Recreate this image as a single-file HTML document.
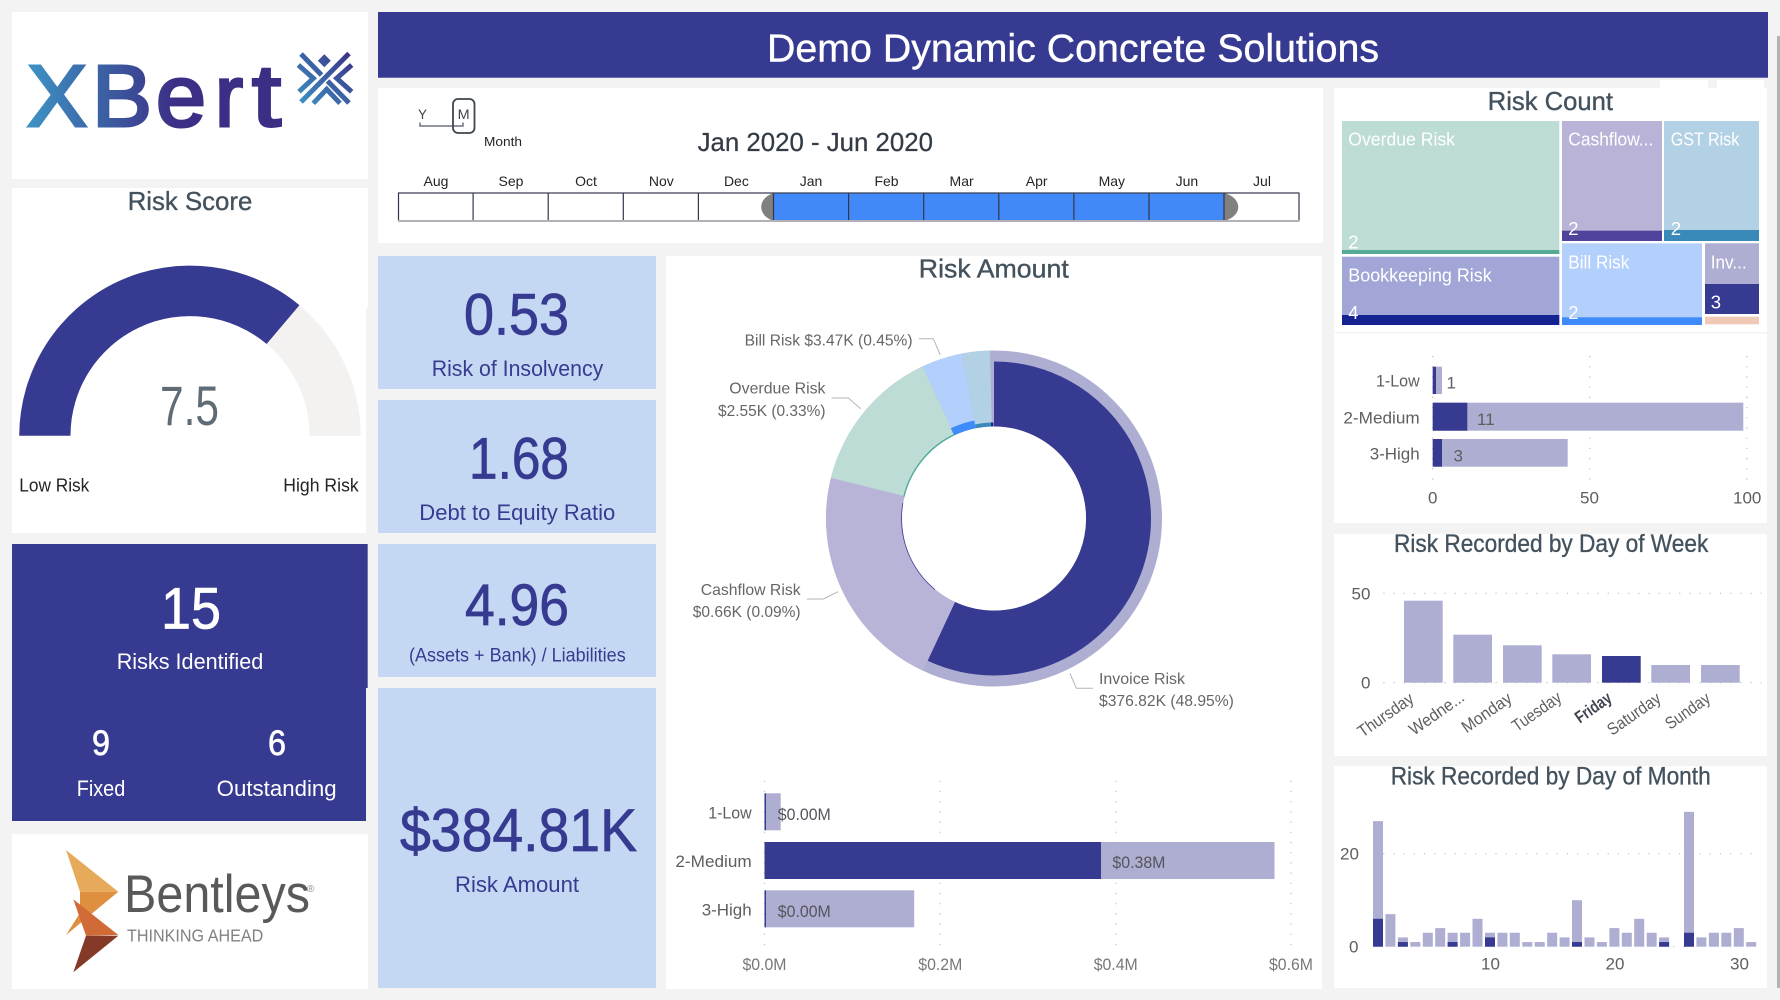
<!DOCTYPE html>
<html lang="en">
<head>
<meta charset="utf-8">
<title>Demo Dynamic Concrete Solutions</title>
<style>
html,body{margin:0;padding:0;background:#f3f3f3;width:1780px;height:1000px;overflow:hidden}
svg{display:block}
text{font-family:"Liberation Sans",sans-serif}
.ti{fill:#44525d;font-size:26px;stroke:#44525d;stroke-width:.35px}
.lb{fill:#605e5c;font-size:17px}
.dl{fill:#666;font-size:16px}
.tm{fill:#fff;font-size:18.5px}
.kn{fill:#373a91;font-size:58px;stroke:#373a91;stroke-width:.8px}
.kl{fill:#373a91;font-size:22px}
.wn{fill:#fff;stroke:#fff;stroke-width:.7px}
.wl{fill:#fff;font-size:22px}
.mo{fill:#252423;font-size:14px;text-anchor:middle}
.gd{stroke:#bdbdbd;stroke-width:1.2;stroke-dasharray:1.2 9;fill:none}
.lf{fill:#aeadd2}
.dk{fill:#373a91}
.ld{fill:none;stroke:#b5b5b5;stroke-width:1}
</style>
</head>
<body>
<svg width="1780" height="1000" viewBox="0 0 1780 1000" xmlns="http://www.w3.org/2000/svg">
<defs>
<linearGradient id="xb" gradientUnits="userSpaceOnUse" x1="26" y1="100" x2="175" y2="100">
<stop offset="0" stop-color="#3d94c5"/><stop offset="1" stop-color="#3b2f85"/>
</linearGradient>
<linearGradient id="xm" gradientUnits="userSpaceOnUse" x1="298" y1="104" x2="352" y2="52">
<stop offset="0" stop-color="#3d94c5"/><stop offset="1" stop-color="#3b2f85"/>
</linearGradient>
</defs>

<!-- background panels -->
<rect x="12" y="12" width="356" height="167" fill="#fff"/>
<rect x="12" y="188" width="354" height="345" fill="#fff"/>
<rect x="366" y="188" width="2" height="120" fill="#fff"/>
<rect x="12" y="834" width="356" height="155" fill="#fff"/>
<rect x="378" y="88" width="945" height="155" fill="#fff"/>
<rect x="666" y="256" width="656" height="733" fill="#fff"/>
<rect x="1334" y="88" width="433" height="435" fill="#fff"/>
<rect x="1660" y="80" width="48" height="8" fill="#fff"/>
<rect x="1717" y="80" width="47" height="8" fill="#fff"/>
<rect x="1334" y="332" width="433" height="1.5" fill="#f4f4f4"/>
<rect x="1334" y="534" width="433" height="222" fill="#fff"/>
<rect x="1334" y="766" width="433" height="222" fill="#fff"/>
<rect x="1777" y="36" width="3" height="952" fill="#b2b2b2"/>

<!-- header -->
<rect x="378" y="12" width="1390" height="66" fill="#373a91"/>
<rect x="378" y="77" width="1390" height="1" fill="#6a6cb0"/>
<text x="767" y="61.7" fill="#fff" stroke="#fff" stroke-width=".4" font-size="38.5" textLength="612" lengthAdjust="spacingAndGlyphs">Demo Dynamic Concrete Solutions</text>

<!-- XBert logo -->
<g fill="url(#xb)" stroke="url(#xb)" stroke-width="3" font-size="87">
<text x="27" y="126" textLength="60" lengthAdjust="spacingAndGlyphs">X</text>
<text x="92" y="126" textLength="60" lengthAdjust="spacingAndGlyphs">B</text>
<text x="156" y="126" textLength="50" lengthAdjust="spacingAndGlyphs">e</text>
<text x="215" y="126" textLength="28" lengthAdjust="spacingAndGlyphs">r</text>
<text x="252" y="126" textLength="29" lengthAdjust="spacingAndGlyphs">t</text>
</g>
<g fill="none" stroke="url(#xm)" stroke-width="5">
<path d="M349 53.5L301 102"/>
<path d="M301 54L321.5 75"/>
<path d="M327.5 81L349 103"/>
<path d="M298.3 65L313.3 78.3L299 91.7"/>
<path d="M351.7 65L336.7 78.3L351.7 91.7"/>
<path d="M313.3 103.3L326.7 89.3L340 103.3"/>
</g>
<path d="M324.3 54.2L330.8 60.7L324.3 67.2L317.8 60.7Z" fill="url(#xm)"/>

<!-- Risk score -->
<text class="ti" x="127.7" y="210" textLength="124.6" lengthAdjust="spacingAndGlyphs">Risk Score</text>
<path d="M19.2 435.7A170.8 170.8 0 0 1 299.5 305.3L266.7 344A119.5 119.5 0 0 0 70.5 435.7Z" fill="#373a91"/>
<path d="M299.5 305.3A170.8 170.8 0 0 1 360.8 435.7L309.5 435.7A119.5 119.5 0 0 0 266.7 344Z" fill="#f3f2f1"/>
<text x="160" y="425" fill="#5f6c75" font-size="56" textLength="59" lengthAdjust="spacingAndGlyphs">7.5</text>
<text x="19.3" y="491.7" fill="#252423" font-size="18.5" textLength="70" lengthAdjust="spacingAndGlyphs">Low Risk</text>
<text x="283.3" y="491.7" fill="#252423" font-size="18.5" textLength="75.4" lengthAdjust="spacingAndGlyphs">High Risk</text>

<!-- Dark card -->
<path d="M12 544H367.7V688H366V821H12Z" fill="#373a91"/>
<text class="wn" x="161" y="628.3" font-size="58" textLength="60" lengthAdjust="spacingAndGlyphs">15</text>
<text class="wl" x="116.7" y="669" textLength="146.6" lengthAdjust="spacingAndGlyphs">Risks Identified</text>
<text class="wn" x="92" y="755" font-size="35" textLength="18" lengthAdjust="spacingAndGlyphs">9</text>
<text class="wn" x="268" y="755" font-size="35" textLength="18" lengthAdjust="spacingAndGlyphs">6</text>
<text class="wl" x="76.7" y="796" textLength="48.6" lengthAdjust="spacingAndGlyphs">Fixed</text>
<text class="wl" x="216.7" y="796" textLength="120" lengthAdjust="spacingAndGlyphs">Outstanding</text>

<!-- Bentleys logo -->
<path d="M66 850L118.3 891.7L80 891.7Z" fill="#e6aa5a"/>
<path d="M80 891.7L118.3 891.7L66 935L80 913Z" fill="#de9040"/>
<path d="M73.3 899.3L118.3 935L86 935.7Z" fill="#d06a36"/>
<path d="M86 935.7L118.3 935.7L73.3 972.3Z" fill="#843a27"/>
<text x="124" y="912" fill="#58595b" font-size="53" textLength="186" lengthAdjust="spacingAndGlyphs">Bentleys</text>
<text x="307" y="892" fill="#8a8a8a" font-size="10">®</text>
<text x="127" y="941.7" fill="#808184" font-size="17.5" textLength="136.3" lengthAdjust="spacingAndGlyphs">THINKING AHEAD</text>

<!-- Slicer -->
<text x="418" y="119" fill="#444" font-size="14" textLength="9" lengthAdjust="spacingAndGlyphs">Y</text>
<text x="457.6" y="119" fill="#444" font-size="14" textLength="12" lengthAdjust="spacingAndGlyphs">M</text>
<path d="M420 122.5V126H463V122.5" fill="none" stroke="#6f7480" stroke-width="1.5"/>
<rect x="453" y="99" width="21.5" height="34" rx="5" fill="none" stroke="#3f4650" stroke-width="1.8"/>
<text x="484" y="146" fill="#252423" font-size="13" textLength="38" lengthAdjust="spacingAndGlyphs">Month</text>
<text x="697.6" y="151" fill="#333b45" stroke="#333b45" stroke-width=".25" font-size="25.6" textLength="235.4" lengthAdjust="spacingAndGlyphs">Jan 2020 - Jun 2020</text>
<text class="mo" x="436" y="186">Aug</text>
<text class="mo" x="511" y="186">Sep</text>
<text class="mo" x="586" y="186">Oct</text>
<text class="mo" x="661.3" y="186">Nov</text>
<text class="mo" x="736.4" y="186">Dec</text>
<text class="mo" x="811" y="186">Jan</text>
<text class="mo" x="886.5" y="186">Feb</text>
<text class="mo" x="961.6" y="186">Mar</text>
<text class="mo" x="1036.7" y="186">Apr</text>
<text class="mo" x="1111.8" y="186">May</text>
<text class="mo" x="1186.9" y="186">Jun</text>
<text class="mo" x="1262" y="186">Jul</text>
<path d="M774 193C757 198 757 216 774 221Z" fill="#808080"/>
<path d="M1224 193C1243 198 1243 216 1224 221Z" fill="#808080"/>
<rect x="774" y="193" width="450" height="28" fill="#4189f8"/>
<path d="M398.5 193V221M473.1 193V221M548.2 193V221M623.3 193V221M698.4 193V221M773.5 193V221M848.6 193V221M923.7 193V221M998.8 193V221M1073.9 193V221M1149 193V221M1224 193V221M1299 193V221" stroke="#33364a" stroke-width="1.2" fill="none"/>
<path d="M398 193H1299.4" stroke="#3a3f55" stroke-width="1.2" fill="none"/>
<path d="M398 221H1299.4" stroke="#b3b0b9" stroke-width="2" fill="none"/>

<!-- KPI cards -->
<rect x="378" y="256" width="278" height="133" fill="#c5d8f3"/>
<rect x="378" y="400" width="278" height="133" fill="#c5d8f3"/>
<rect x="378" y="544" width="278" height="133" fill="#c5d8f3"/>
<rect x="378" y="688" width="278" height="300" fill="#c5d8f3"/>
<text class="kn" x="464" y="334.3" textLength="105" lengthAdjust="spacingAndGlyphs">0.53</text>
<text class="kl" x="431.7" y="376" textLength="171.6" lengthAdjust="spacingAndGlyphs">Risk of Insolvency</text>
<text class="kn" x="469" y="478.3" textLength="100" lengthAdjust="spacingAndGlyphs">1.68</text>
<text class="kl" x="419.3" y="520" textLength="196" lengthAdjust="spacingAndGlyphs">Debt to Equity Ratio</text>
<text class="kn" x="465" y="625" textLength="104" lengthAdjust="spacingAndGlyphs">4.96</text>
<text class="kl" x="409" y="661.7" style="font-size:19px" textLength="216.7" lengthAdjust="spacingAndGlyphs">(Assets + Bank) / Liabilities</text>
<text class="kn" x="400" y="851" style="font-size:60px" textLength="237" lengthAdjust="spacingAndGlyphs">$384.81K</text>
<text class="kl" x="455" y="892" textLength="124" lengthAdjust="spacingAndGlyphs">Risk Amount</text>

<!-- Donut -->
<text class="ti" x="918.8" y="277.3" textLength="150" lengthAdjust="spacingAndGlyphs">Risk Amount</text>
<g fill="none" transform="rotate(-90 994 518.5)">
<circle cx="994" cy="518.5" r="130" stroke-width="76" pathLength="360" stroke="#aeadd2"/>
<circle cx="994" cy="518.5" r="130" stroke-width="76" pathLength="360" stroke="#b8b4d8" stroke-dasharray="79 281" stroke-dashoffset="-205"/>
<circle cx="994" cy="518.5" r="130" stroke-width="76" pathLength="360" stroke="#bcdcd5" stroke-dasharray="50.8 309.2" stroke-dashoffset="-284"/>
<circle cx="994" cy="518.5" r="130" stroke-width="76" pathLength="360" stroke="#b3cffc" stroke-dasharray="14.2 345.8" stroke-dashoffset="-334.8"/>
<circle cx="994" cy="518.5" r="130" stroke-width="76" pathLength="360" stroke="#b3d1e5" stroke-dasharray="9.6 350.4" stroke-dashoffset="-349"/>
<circle cx="994" cy="518.5" r="124.5" stroke-width="65" pathLength="360" stroke="#373a91" stroke-dasharray="205 155"/>
<circle cx="994" cy="518.5" r="92.6" stroke-width="1.6" pathLength="360" stroke="#4fa898" stroke-dasharray="50.8 309.2" stroke-dashoffset="-284"/>
<circle cx="994" cy="518.5" r="96" stroke-width="8" pathLength="360" stroke="#3f8bfa" stroke-dasharray="14.2 345.8" stroke-dashoffset="-334.8"/>
<circle cx="994" cy="518.5" r="94" stroke-width="4" pathLength="360" stroke="#3a8ab9" stroke-dasharray="9.6 350.4" stroke-dashoffset="-349"/>
<circle cx="994" cy="518.5" r="94" stroke-width="4" pathLength="360" stroke="#12238f" stroke-dasharray="1.4 358.6" stroke-dashoffset="-358.6"/>
<circle cx="994" cy="518.5" r="92.4" stroke-width="0.9" pathLength="360" stroke="#3d3a95" stroke-dasharray="60 300" stroke-dashoffset="-220"/>
</g>
<circle cx="994" cy="518.5" r="92" fill="#fff"/>
<path class="ld" d="M918.8 338.7H933.3L940.3 355"/>
<path class="ld" d="M831.7 398H848.3L860.7 408.7"/>
<path class="ld" d="M806.8 599H823.4L838 591.7"/>
<path class="ld" d="M1070 673.3L1076.3 688.3H1093"/>
<text class="dl" x="744.6" y="345.5" textLength="168" lengthAdjust="spacingAndGlyphs">Bill Risk $3.47K (0.45%)</text>
<text class="dl" x="729.3" y="393.5" textLength="96.2" lengthAdjust="spacingAndGlyphs">Overdue Risk</text>
<text class="dl" x="718" y="416" textLength="107.5" lengthAdjust="spacingAndGlyphs">$2.55K (0.33%)</text>
<text class="dl" x="700.7" y="595" textLength="99.9" lengthAdjust="spacingAndGlyphs">Cashflow Risk</text>
<text class="dl" x="692.8" y="617" textLength="107.8" lengthAdjust="spacingAndGlyphs">$0.66K (0.09%)</text>
<text class="dl" x="1099" y="684" textLength="86" lengthAdjust="spacingAndGlyphs">Invoice Risk</text>
<text class="dl" x="1099" y="706" textLength="134.9" lengthAdjust="spacingAndGlyphs">$376.82K (48.95%)</text>

<!-- Risk amount bars -->
<path class="gd" d="M764.5 780.7V948M940.3 780.7V948M1115.7 780.7V948M1291 780.7V948"/>
<rect class="lf" x="764.5" y="793.3" width="16.2" height="37"/>
<rect class="dk" x="764.5" y="793.3" width="1.5" height="37"/>
<rect class="lf" x="764.5" y="842" width="510" height="37"/>
<rect class="dk" x="764.5" y="842" width="336.5" height="37"/>
<rect class="lf" x="764.5" y="890.3" width="149.7" height="37"/>
<rect class="dk" x="764.5" y="890.3" width="1.5" height="37"/>
<text class="lb" x="708.2" y="818.3" textLength="43.5" lengthAdjust="spacingAndGlyphs">1-Low</text>
<text class="lb" x="675.4" y="867" textLength="76.3" lengthAdjust="spacingAndGlyphs">2-Medium</text>
<text class="lb" x="701.7" y="915.5" textLength="50" lengthAdjust="spacingAndGlyphs">3-High</text>
<text class="lb" x="777.8" y="819.8" style="fill:#55545c" textLength="53" lengthAdjust="spacingAndGlyphs">$0.00M</text>
<text class="lb" x="1112.4" y="868" style="fill:#55545c" textLength="53" lengthAdjust="spacingAndGlyphs">$0.38M</text>
<text class="lb" x="777.8" y="917" style="fill:#55545c" textLength="53" lengthAdjust="spacingAndGlyphs">$0.00M</text>
<text class="lb" x="742.5" y="970" textLength="44" lengthAdjust="spacingAndGlyphs" style="fill:#777">$0.0M</text>
<text class="lb" x="918.3" y="970" textLength="44" lengthAdjust="spacingAndGlyphs" style="fill:#777">$0.2M</text>
<text class="lb" x="1093.7" y="970" textLength="44" lengthAdjust="spacingAndGlyphs" style="fill:#777">$0.4M</text>
<text class="lb" x="1269" y="970" textLength="44" lengthAdjust="spacingAndGlyphs" style="fill:#777">$0.6M</text>

<!-- Risk Count treemap -->
<text class="ti" x="1487.7" y="110" textLength="125.3" lengthAdjust="spacingAndGlyphs">Risk Count</text>
<rect x="1342" y="121" width="217.3" height="133" fill="#bcdcd5"/>
<rect x="1342" y="250" width="217.3" height="4" fill="#56ab98"/>
<rect x="1562" y="121" width="100" height="120" fill="#b8b3d7"/>
<rect x="1562" y="230.7" width="100" height="10.3" fill="#4f429b"/>
<rect x="1664" y="121" width="95" height="120" fill="#b3d1e5"/>
<rect x="1664" y="230" width="95" height="11" fill="#3a8ab9"/>
<rect x="1342" y="256.7" width="217.3" height="68.3" fill="#a2a6d6"/>
<rect x="1342" y="315" width="217.3" height="10" fill="#14238f"/>
<rect x="1562" y="243.3" width="140" height="81.7" fill="#b3cffc"/>
<rect x="1562" y="317.3" width="140" height="7.7" fill="#3f8bfa"/>
<rect x="1705" y="243.3" width="54" height="41" fill="#aeadd2"/>
<rect x="1705" y="284" width="54" height="30" fill="#373a91"/>
<rect x="1705" y="316.7" width="54" height="7.6" fill="#f0c8b6"/>
<text class="tm" x="1348.3" y="145.3" textLength="106.7" lengthAdjust="spacingAndGlyphs">Overdue Risk</text>
<text class="tm" x="1348.3" y="248.3" textLength="10.3" lengthAdjust="spacingAndGlyphs">2</text>
<text class="tm" x="1568.3" y="145.3" textLength="85" lengthAdjust="spacingAndGlyphs">Cashflow...</text>
<text class="tm" x="1568.3" y="235" textLength="10.3" lengthAdjust="spacingAndGlyphs">2</text>
<text class="tm" x="1670.7" y="145.3" textLength="68.6" lengthAdjust="spacingAndGlyphs">GST Risk</text>
<text class="tm" x="1670.7" y="235" textLength="10.3" lengthAdjust="spacingAndGlyphs">2</text>
<text class="tm" x="1348.3" y="281.7" textLength="143.4" lengthAdjust="spacingAndGlyphs">Bookkeeping Risk</text>
<text class="tm" x="1348.3" y="319" textLength="10.3" lengthAdjust="spacingAndGlyphs">4</text>
<text class="tm" x="1568.3" y="268.3" textLength="61" lengthAdjust="spacingAndGlyphs">Bill Risk</text>
<text class="tm" x="1568.3" y="319" textLength="10.3" lengthAdjust="spacingAndGlyphs">2</text>
<text class="tm" x="1710.7" y="268.3" textLength="36" lengthAdjust="spacingAndGlyphs">Inv...</text>
<text class="tm" x="1710.7" y="308.3" textLength="10.3" lengthAdjust="spacingAndGlyphs">3</text>

<!-- Risk Count bars -->
<path class="gd" d="M1432.7 356V483M1589.7 356V483M1746.7 356V483"/>
<rect class="lf" x="1432.7" y="366.7" width="9.3" height="27.3"/>
<rect class="dk" x="1432.7" y="366.7" width="3.3" height="27.3"/>
<rect class="lf" x="1432.7" y="402.7" width="310.6" height="28"/>
<rect class="dk" x="1432.7" y="402.7" width="34.6" height="28"/>
<rect class="lf" x="1432.7" y="439" width="135" height="27.7"/>
<rect class="dk" x="1432.7" y="439" width="9.3" height="27.7"/>
<text class="lb" x="1376" y="386.7" textLength="43.7" lengthAdjust="spacingAndGlyphs">1-Low</text>
<text class="lb" x="1343.4" y="423.3" textLength="76.3" lengthAdjust="spacingAndGlyphs">2-Medium</text>
<text class="lb" x="1369.7" y="459.3" textLength="50" lengthAdjust="spacingAndGlyphs">3-High</text>
<text class="lb" x="1446.5" y="388.5">1</text>
<text class="lb" x="1477" y="424.8">11</text>
<text class="lb" x="1453.5" y="461.5">3</text>
<text class="lb" x="1428" y="503.3">0</text>
<text class="lb" x="1580" y="503.3">50</text>
<text class="lb" x="1733" y="503.3">100</text>

<!-- Day of week -->
<text class="ti" x="1394" y="552.2" style="font-size:25px" textLength="314.3" lengthAdjust="spacingAndGlyphs">Risk Recorded by Day of Week</text>
<path class="gd" d="M1383.3 593.3H1761.7M1383.3 682.7H1761.7"/>
<rect class="lf" x="1404" y="600.7" width="38.7" height="82"/>
<rect class="lf" x="1453.3" y="634.7" width="38.7" height="48"/>
<rect class="lf" x="1503" y="645.3" width="38.7" height="37.4"/>
<rect class="lf" x="1552.3" y="654.3" width="38.7" height="28.4"/>
<rect class="dk" x="1602" y="656" width="38.7" height="26.7"/>
<rect class="lf" x="1651.3" y="665" width="38.7" height="17.7"/>
<rect class="lf" x="1701" y="665" width="38.7" height="17.7"/>
<text class="lb" x="1351.5" y="599.3">50</text>
<text class="lb" x="1361" y="688.3">0</text>
<text class="lb" x="1385.7" y="720.5" text-anchor="middle" textLength="64" lengthAdjust="spacingAndGlyphs" transform="rotate(-35 1385.7 715)">Thursday</text>
<text class="lb" x="1436.7" y="718.8" text-anchor="middle" textLength="63" lengthAdjust="spacingAndGlyphs" transform="rotate(-35 1436.7 713.3)">Wedne...</text>
<text class="lb" x="1486.7" y="718.2" text-anchor="middle" textLength="57" lengthAdjust="spacingAndGlyphs" transform="rotate(-35 1486.7 712.7)">Monday</text>
<text class="lb" x="1536.7" y="717.2" text-anchor="middle" textLength="56" lengthAdjust="spacingAndGlyphs" transform="rotate(-35 1536.7 711.7)">Tuesday</text>
<text class="lb" x="1593.3" y="713.2" text-anchor="middle" textLength="40.5" lengthAdjust="spacingAndGlyphs" font-weight="700" style="fill:#3f4450" transform="rotate(-35 1593.3 707.7)">Friday</text>
<text class="lb" x="1634" y="719.5" text-anchor="middle" textLength="61" lengthAdjust="spacingAndGlyphs" transform="rotate(-35 1634 714)">Saturday</text>
<text class="lb" x="1687.7" y="716.5" text-anchor="middle" textLength="50.6" lengthAdjust="spacingAndGlyphs" transform="rotate(-35 1687.7 711)">Sunday</text>

<!-- Day of month -->
<text class="ti" x="1390.7" y="784.5" style="font-size:25px" textLength="320" lengthAdjust="spacingAndGlyphs">Risk Recorded by Day of Month</text>
<path class="gd" d="M1373 853.7H1752M1673 946.7H1684"/>
<g transform="translate(0 946.7) scale(1 -4.65)">
<g class="lf">
<rect x="1373" y="0" width="10" height="27"/>
<rect x="1385.4" y="0" width="10" height="7"/>
<rect x="1397.9" y="0" width="10" height="2"/>
<rect x="1410.3" y="0" width="10" height="1"/>
<rect x="1422.8" y="0" width="10" height="3"/>
<rect x="1435.2" y="0" width="10" height="4"/>
<rect x="1447.6" y="0" width="10" height="3"/>
<rect x="1460.1" y="0" width="10" height="3"/>
<rect x="1472.5" y="0" width="10" height="6"/>
<rect x="1485" y="0" width="10" height="3"/>
<rect x="1497.4" y="0" width="10" height="3"/>
<rect x="1509.8" y="0" width="10" height="3"/>
<rect x="1522.3" y="0" width="10" height="1"/>
<rect x="1534.7" y="0" width="10" height="1"/>
<rect x="1547.2" y="0" width="10" height="3"/>
<rect x="1559.6" y="0" width="10" height="2"/>
<rect x="1572" y="0" width="10" height="10"/>
<rect x="1584.5" y="0" width="10" height="2"/>
<rect x="1596.9" y="0" width="10" height="1"/>
<rect x="1609.4" y="0" width="10" height="4"/>
<rect x="1621.8" y="0" width="10" height="3"/>
<rect x="1634.2" y="0" width="10" height="6"/>
<rect x="1646.7" y="0" width="10" height="3"/>
<rect x="1659.1" y="0" width="10" height="2"/>
<rect x="1684" y="0" width="10" height="29"/>
<rect x="1696.4" y="0" width="10" height="2"/>
<rect x="1708.9" y="0" width="10" height="3"/>
<rect x="1721.3" y="0" width="10" height="3"/>
<rect x="1733.8" y="0" width="10" height="4"/>
<rect x="1746.2" y="0" width="10" height="1"/>
</g>
<g class="dk">
<rect x="1373" y="0" width="10" height="6"/>
<rect x="1397.9" y="0" width="10" height="1"/>
<rect x="1447.6" y="0" width="10" height="1"/>
<rect x="1485" y="0" width="10" height="2"/>
<rect x="1572" y="0" width="10" height="1"/>
<rect x="1659.1" y="0" width="10" height="1"/>
<rect x="1684" y="0" width="10" height="3"/>
</g>
</g>
<text class="lb" x="1340" y="859.3">20</text>
<text class="lb" x="1349" y="952.3">0</text>
<text class="lb" x="1481" y="969.3">10</text>
<text class="lb" x="1605.5" y="969.3">20</text>
<text class="lb" x="1730" y="969.3">30</text>
</svg>
</body>
</html>
